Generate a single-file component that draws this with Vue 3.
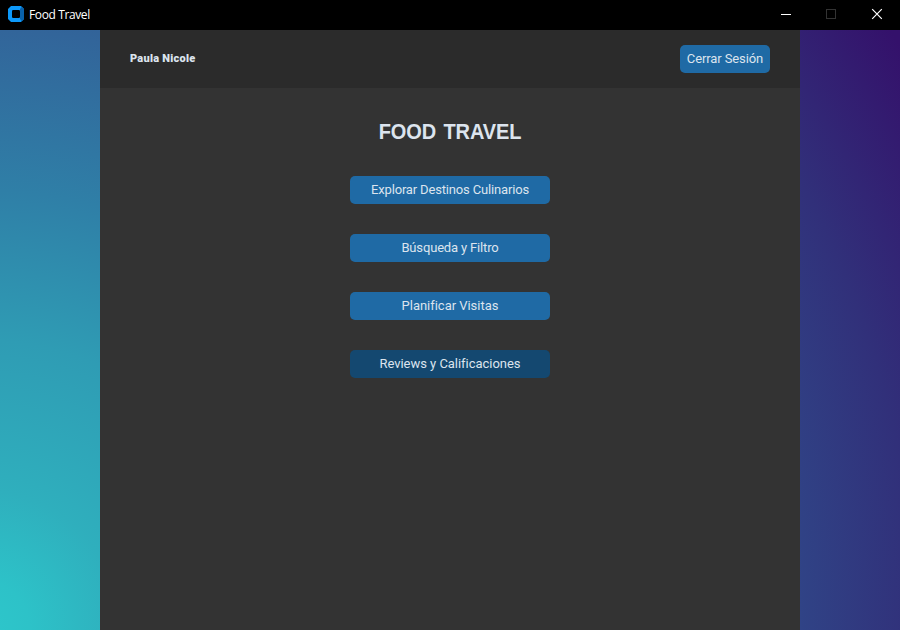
<script setup>
const actions = [
  { label: 'Explorar Destinos Culinarios', spacing: 'tight' },
  { label: 'Búsqueda y Filtro', spacing: 'tight' },
  { label: 'Planificar Visitas' },
  { label: 'Reviews y Calificaciones', hovered: true },
]
</script>

<template>
  <div class="window">
    <header class="titlebar">
      <svg class="logo" width="16" height="16" viewBox="0 0 16 16">
        <path d="M3 0H13L16 3V13L13 16H3L0 13V3Z" fill="#0d99fa" />
        <path d="M12 3L14 0.8L16 3V13L14 15.2L12 13Z" fill="#0961ab" />
        <rect x="4" y="4" width="8" height="8" rx="1.2" fill="#000" />
      </svg>
      <span class="caption">Food Travel</span>
      <div class="controls">
        <svg width="46" height="30" viewBox="0 0 46 30" shape-rendering="crispEdges">
          <rect x="19" y="14" width="10" height="1" fill="#fff" />
        </svg>
        <svg width="46" height="30" viewBox="0 0 46 30">
          <rect x="18.5" y="9.5" width="9" height="9" fill="none" stroke="#333" />
        </svg>
        <svg width="46" height="30" viewBox="0 0 46 30">
          <path d="M18.2 9.2L27.8 18.8M27.8 9.2L18.2 18.8" stroke="#fff" stroke-width="1.2" />
        </svg>
      </div>
    </header>
    <div class="backdrop">
      <main class="panel">
        <div class="userbar">
          <span class="user">Paula Nicole</span>
          <button class="btn logout">Cerrar Sesión</button>
        </div>
        <h1 class="title">FOOD TRAVEL</h1>
        <nav class="menu">
          <button v-for="a in actions" :key="a.label" class="btn" :class="[a.spacing, { hovered: a.hovered }]">{{ a.label }}</button>
        </nav>
      </main>
    </div>
  </div>
</template>

<style>
body {
  margin: 0;
  background: #000;
}
</style>

<style scoped>
.window {
  width: 900px;
  height: 630px;
  display: flex;
  flex-direction: column;
  overflow: hidden;
}
.titlebar {
  height: 30px;
  flex: none;
  display: flex;
  align-items: center;
  background: #000;
  color: #fff;
}
.logo {
  margin: 0 5px 2px 8px;
}
.caption {
  font: 12px/30px "Open Sans", sans-serif;
  letter-spacing: -0.38px;
}
.controls {
  margin-left: auto;
  display: flex;
}
.backdrop {
  flex: 1;
  display: flex;
  justify-content: center;
  background: radial-gradient(circle at -20px 600px, #2dc7cb 0, #2dc2c8 50px, #2fafbd 140px, #2f9cb4 290px, #2f7fa7 440px, #32659a 600px, #304386 820px, #31307a 935px, #34116b 1090px);
}
.panel {
  width: 700px;
  background: #333;
}
.userbar {
  height: 58px;
  box-sizing: border-box;
  padding: 0 30px;
  display: flex;
  align-items: center;
  justify-content: space-between;
  background: #2b2b2b;
}
.user {
  font: 900 11px/16px Roboto, sans-serif;
  color: #dce4ee;
  letter-spacing: 0.25px;
}
.title {
  margin: 32px 0 0;
  font: bold 20px/24px "Liberation Sans", sans-serif;
  letter-spacing: -0.1px;
  word-spacing: 2px;
  transform: scaleY(1.06);
  text-align: center;
  color: #dce4ee;
}
.menu {
  margin-top: 32px;
  display: flex;
  flex-direction: column;
  align-items: center;
  gap: 30px;
}
.btn {
  width: 200px;
  height: 28px;
  padding: 0;
  border: 0;
  border-radius: 5px;
  background: #1f6aa5;
  color: #dce4ee;
  font: 13px/28px Roboto, sans-serif;
  letter-spacing: -0.03px;
}
.tight {
  letter-spacing: -0.16px;
}
.logout {
  width: 90px;
  letter-spacing: -0.1px;
}
.hovered {
  background: #144870;
}
</style>
